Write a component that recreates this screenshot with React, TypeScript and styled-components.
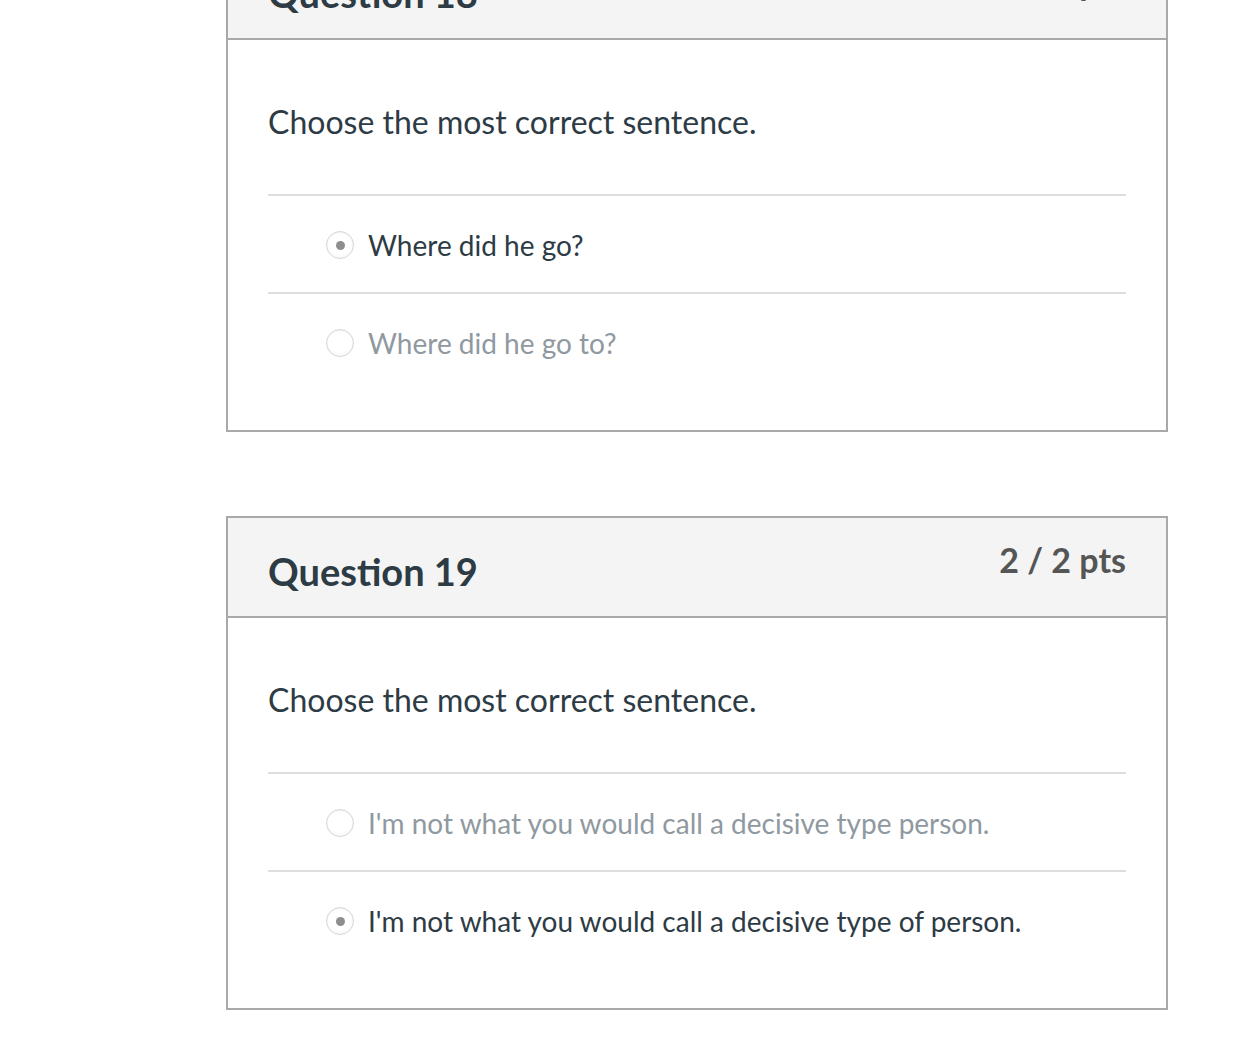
import React from "react";
import styled, { createGlobalStyle } from "styled-components";

const GlobalStyle = createGlobalStyle`
  html, body {
    margin: 0;
    padding: 0;
    background: #ffffff;
    font-family: Lato, "Open Sans", "Liberation Sans", sans-serif;
    overflow: hidden;
  }
`;

const Page = styled.div`
  width: 942px;
  margin-left: 226px;
  margin-top: -62px;
  display: flex;
  flex-direction: column;
  gap: 84px;
`;

const Card = styled.section`
  border: 2px solid #a9a9a9;
  background: #ffffff;
`;

const Header = styled.header`
  height: 100px;
  box-sizing: border-box;
  padding: 21px 40px 0;
  background: #f4f4f4;
  border-bottom: 2px solid #a9a9a9;
  display: flex;
  justify-content: space-between;
  align-items: flex-start;
`;

const Title = styled.h2`
  margin: 9px 0 0;
  font-size: 38px;
  line-height: 46px;
  font-weight: 700;
  color: #2d3b45;
  font-variant-ligatures: common-ligatures;
`;

const Points = styled.span`
  margin-top: -2px;
  font-size: 34px;
  line-height: 46px;
  font-weight: 700;
  color: #555555;
`;

const Body = styled.div`
  padding: 62px 40px 40px;
`;

const Prompt = styled.p`
  margin: 0 0 52px;
  font-size: 32px;
  line-height: 40px;
  color: #2d3b45;
`;

const Answers = styled.ul`
  list-style: none;
  margin: 0;
  padding: 0;
`;

const Answer = styled.li<{ $selected: boolean }>`
  height: 98px;
  box-sizing: border-box;
  border-top: 2px solid #dedede;
  padding: 2px 0 0 58px;
  display: flex;
  align-items: center;
  gap: 14px;
  font-size: 28px;
  color: ${(p) => (p.$selected ? "#2d3b45" : "#8f999f")};
`;

const Radio = styled.span<{ $selected: boolean }>`
  width: 28px;
  height: 28px;
  box-sizing: border-box;
  border-radius: 50%;
  border: 1.5px solid #d6d6d6;
  background: radial-gradient(circle at 50% 40%, #ffffff 55%, #f1f1f1 100%);
  box-shadow: inset 0 1px 2px rgba(0, 0, 0, 0.06);
  display: flex;
  align-items: center;
  justify-content: center;
  flex-shrink: 0;

  &::after {
    content: "";
    width: 9px;
    height: 9px;
    border-radius: 50%;
    background: #8e8e8e;
    display: ${(p) => (p.$selected ? "block" : "none")};
  }
`;

type Question = {
  title: string;
  points: string;
  prompt: string;
  answers: { text: string; selected: boolean }[];
};

const questions: Question[] = [
  {
    title: "Question 18",
    points: "2 / 2 pts",
    prompt: "Choose the most correct sentence.",
    answers: [
      { text: "Where did he go?", selected: true },
      { text: "Where did he go to?", selected: false },
    ],
  },
  {
    title: "Question 19",
    points: "2 / 2 pts",
    prompt: "Choose the most correct sentence.",
    answers: [
      { text: "I'm not what you would call a decisive type person.", selected: false },
      { text: "I'm not what you would call a decisive type of person.", selected: true },
    ],
  },
];

const App = () => (
  <>
    <GlobalStyle />
    <Page>
      {questions.map((q) => (
        <Card key={q.title}>
          <Header>
            <Title>{q.title}</Title>
            <Points>{q.points}</Points>
          </Header>
          <Body>
            <Prompt>{q.prompt}</Prompt>
            <Answers>
              {q.answers.map((a) => (
                <Answer key={a.text} $selected={a.selected}>
                  <Radio $selected={a.selected} />
                  {a.text}
                </Answer>
              ))}
            </Answers>
          </Body>
        </Card>
      ))}
    </Page>
  </>
);

export default App;
